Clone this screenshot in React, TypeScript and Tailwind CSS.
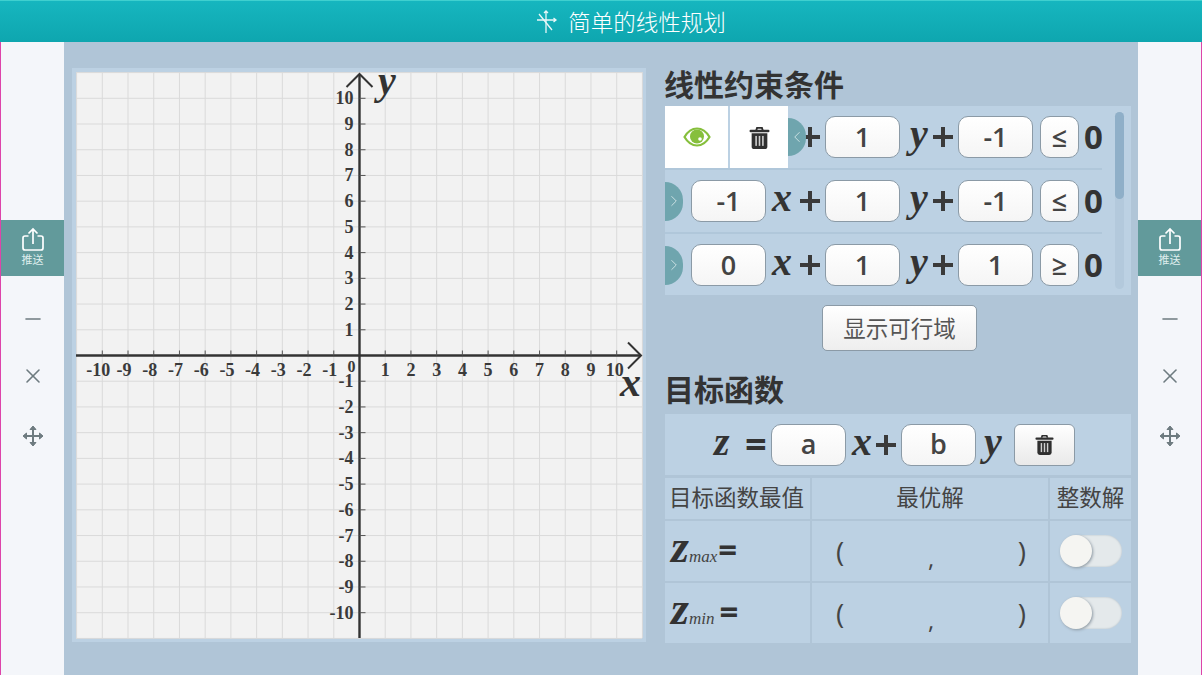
import { ChevronLeft, ChevronRight, Minus, X } from "lucide-react";

const sans = "font-['Open_Sans','Noto_Sans_CJK_SC',sans-serif]";
const math = "font-['Liberation_Serif',serif] italic font-bold text-[#333]";

const Share = () => (
  <svg width="24" height="25" viewBox="0 0 24 25" fill="none" stroke="white" strokeWidth="1.7">
    <path d="M7.5 9H4a2 2 0 0 0-2 2v10a2 2 0 0 0 2 2h16a2 2 0 0 0 2-2V11a2 2 0 0 0-2-2h-3.5" />
    <path d="M12 17V2M7.5 6.5L12 2l4.5 4.5" />
  </svg>
);

const MoveIcon = () => (
  <svg width="22" height="22" viewBox="0 0 22 22" fill="#6e7b80" stroke="#6e7b80" strokeWidth="1">
    <path d="M3 11h16M11 3v16" strokeWidth="2" fill="none" />
    <path d="M11 1l3 3.5H8zM11 21l-3-3.5h6zM1 11l3.5-3v6zM21 11l-3.5 3V8z" strokeLinejoin="round" />
  </svg>
);

const TrashIcon = ({ size = 21 }: { size?: number }) => (
  <svg width={size} height={size + 2} viewBox="0 0 20 22" fill="#2f2f2f">
    <path d="M6 4l1-3h6l1 3h-1.8l-.6-1.4H8.400L7.800 4z" />
    <rect x="0.500" y="3.500" width="19" height="2.500" rx="1" />
    <path d="M2.500 7h15v12.500a2.500 2.500 0 0 1-2.500 2.500H5a2.500 2.500 0 0 1-2.500-2.500z" />
    <g fill="#cfcfcf">
      <rect x="6" y="9.500" width="1.500" height="9.500" />
      <rect x="9.250" y="9.500" width="1.500" height="9.500" />
      <rect x="12.500" y="9.500" width="1.500" height="9.500" />
    </g>
  </svg>
);

const EyeIcon = () => (
  <svg width="28" height="20" viewBox="0 0 28 20">
    <path d="M1.500 10C5 4 9 1.500 14 1.500S23 4 26.500 10C23 16 19 18.500 14 18.500S5 16 1.500 10z" fill="white" stroke="#86bf3c" strokeWidth="2.200" />
    <circle cx="14" cy="9.500" r="7" fill="#86bf3c" />
    <circle cx="17" cy="12" r="1.800" fill="white" />
  </svg>
);

const SideBar = ({ side }: { side: "left" | "right" }) => (
  <div
    className={`w-[64px] shrink-0 h-full bg-[#f4f6fa] flex flex-col items-center pt-[178px] ${
      side === "left" ? "border-l border-[#dd44aa]" : "border-r border-[#dd44aa]"
    }`}
  >
    <div className="w-full h-[56px] pb-[3px] bg-[#629a9b] flex flex-col items-center justify-center text-white">
      <Share />
      <span className="text-[11px] leading-[13px] mt-[1px] text-[#dfeeee] font-['Noto_Sans_CJK_SC',sans-serif]">推送</span>
    </div>
    <Minus className="mt-[31px] text-[#6e7b80]" size={24} strokeWidth={1.6} />
    <X className="mt-[33px] text-[#6e7b80]" size={24} strokeWidth={1.6} />
    <div className="mt-[37px]">
      <MoveIcon />
    </div>
  </div>
);

const Graph = () => {
  const step = 25.72;
  const ox = 283.5;
  const oy = 283.5;
  const ticks = Array.from({ length: 21 }, (_, i) => i - 10).filter((t) => t !== 0);
  return (
    <svg width="566" height="566" viewBox="0 0 566 566" className="block bg-[#f2f2f2] overflow-visible">
      {Array.from({ length: 23 }, (_, i) => i - 11).map((t) => (
        <g key={t} stroke="#dadada" strokeWidth="1">
          <line x1={ox + t * step} y1="0" x2={ox + t * step} y2="566" />
          <line x1="0" y1={oy + t * step} x2="566" y2={oy + t * step} />
        </g>
      ))}
      <g stroke="#333" strokeWidth="2.400" fill="none">
        <line x1="0" y1={oy} x2="565" y2={oy} />
        <line x1={ox} y1="2" x2={ox} y2="566" />
        <path d="M270.500 15 L283.500 2 L296.500 15" strokeWidth="2" />
        <path d="M552 270.500 L565 283.500 L552 296.500" strokeWidth="2" />
      </g>
      {ticks.map((t) => (
        <g key={t} stroke="#555" strokeWidth="1">
          <line x1={ox + t * step} y1={oy - 5} x2={ox + t * step} y2={oy} />
          <line x1={ox} y1={oy - t * step} x2={ox + 6} y2={oy - t * step} />
        </g>
      ))}
      <g className="font-['Liberation_Serif',serif] font-bold" fill="#3a3a3a" fontSize="18">
        {ticks.map((t) => (
          <text key={t} x={ox + t * step - (t < 0 ? 4 : t === 10 ? 2 : 0)} y={oy + 20} textAnchor="middle">
            {t}
          </text>
        ))}
        {ticks.map((t) => (
          <text key={t} x={ox - 6} y={oy - t * step + 6} textAnchor="end">
            {t}
          </text>
        ))}
        <text x={ox - 8} y={oy + 16} textAnchor="middle" fontSize="16">0</text>
      </g>
      <text x="302" y="22" fontSize="40" fill="#333" className="font-['Liberation_Serif',serif] italic font-bold">y</text>
      <text x="544" y="324" fontSize="42" fill="#333" className="font-['Liberation_Serif',serif] italic font-bold">x</text>
    </svg>
  );
};

const Field = ({ value }: { value: string }) => (
  <div
    className={`w-[75px] h-[42px] shrink-0 rounded-[10px] border border-[#8b9aa6] bg-gradient-to-b from-white to-[#f5f5f5] flex items-center justify-center text-[27px] font-semibold text-[#444] ${sans}`}
  >
    {value}
  </div>
);

const Letter = ({ children, className }: { children: string; className: string }) => (
  <span className={`${math} shrink-0 text-[40px] leading-none -mt-[6px] ${className}`}>{children}</span>
);

const Plus = ({ className }: { className: string }) => (
  <svg width="20" height="20" viewBox="0 0 20 20" className={`shrink-0 ${className}`} fill="#3a3a3a">
    <rect x="0" y="8" width="20" height="4" />
    <rect x="8" y="0" width="4" height="20" />
  </svg>
);

const Constraint = ({ a, b, c, op }: { a: string; b: string; c: string; op: string }) => (
  <div className="h-[64px] shrink-0 flex items-center border-b-2 border-[#b0c7da] w-[437px]">
    <div className="w-[18px] h-[39px] shrink-0 rounded-r-full bg-[#6fa5ae] flex items-center text-[#dcebec]">
      <ChevronRight size={20} strokeWidth={1.1} />
    </div>
    <div className="ml-[8px] shrink-0">
      <Field value={a} />
    </div>
    <Letter className="ml-[6px] w-[22px]">x</Letter>
    <Plus className="ml-[6px]" />
    <div className="ml-[5px] shrink-0">
      <Field value={b} />
    </div>
    <Letter className="ml-[10px] w-[20px]">y</Letter>
    <Plus className="ml-[3px]" />
    <div className="ml-[5px] shrink-0">
      <Field value={c} />
    </div>
    <div
      className={`ml-[7px] w-[39px] h-[42px] shrink-0 rounded-[10px] border border-[#8b9aa6] bg-gradient-to-b from-white to-[#f5f5f5] flex items-center justify-center text-[27px] font-semibold text-[#444] ${sans}`}
    >
      {op}
    </div>
    <span className={`ml-[5px] shrink-0 text-[33px] font-bold text-[#333] ${sans}`}>0</span>
  </div>
);

const Toggle = () => (
  <div className="w-[62px] h-[32px] rounded-full bg-[#e4e9eb] shadow-[inset_0_0_2px_#a9b7c2] flex items-center">
    <div className="w-[32px] h-[32px] rounded-full bg-[#f5f5f2] shadow-[1px_1px_3px_#8d99a3]" />
  </div>
);

const Cell = ({ children, className = "" }: { children?: React.ReactNode; className?: string }) => (
  <div className={`bg-[#bcd1e3] flex items-center ${className}`}>{children}</div>
);

const Solution = () => (
  <Cell className={`justify-between pl-[24px] pr-[22px] text-[28px] text-[#444] ${sans}`}>
    <span>(</span>
    <span className="mt-[14px] text-[24px]">,</span>
    <span>)</span>
  </Cell>
);

const ZLabel = ({ sub, gap }: { sub: string; gap: string }) => (
  <Cell className="pl-[6px]">
    <span className={`${math} text-[46px] leading-none -mt-[8px]`}>z</span>
    <span className="font-['Liberation_Serif',serif] italic text-[17px] text-[#444] mt-[12px]">{sub}</span>
    <span className={`text-[33px] font-bold text-[#333] leading-none -mt-[3px] ${gap} ${sans}`}>=</span>
  </Cell>
);

export default function App() {
  return (
    <div className={`w-[1202px] h-[675px] overflow-hidden flex flex-col ${sans}`}>
      <header className="h-[42px] shrink-0 pl-[60px] bg-gradient-to-b from-[#16b6bf] to-[#0ea6af] border-t border-[#3fd0cf] flex items-center justify-center text-white text-[22.500px]">
        <svg width="22" height="24" viewBox="0 0 22 24" fill="none" stroke="white" strokeWidth="1.300" className="mr-[10px] opacity-90">
          <path d="M1 10h19M10 1v22M17.500 8l2.500 2-2.500 2M8 3l2-2 2 2" />
          <path d="M3 4l13 16" />
        </svg>
        <span className="font-['Noto_Sans_CJK_SC',sans-serif] font-light">简单的线性规划</span>
      </header>
      <div className="flex-1 flex min-h-0">
        <SideBar side="left" />
        <main className="flex-1 bg-[#b0c5d7] flex pl-[8px] pt-[26px]">
          <div className="w-[574px] h-[574px] p-[4px] bg-[#bcd1e3] shrink-0">
            <Graph />
          </div>
          <div className="ml-[18px] w-[467px] flex flex-col font-['Noto_Sans_CJK_SC',sans-serif]">
            <h2 className="h-[38px] text-[30px] leading-[30px] font-bold text-[#333]">线性约束条件</h2>
            <div className="relative ml-[1px] w-[466px] h-[189px] bg-[#bcd1e3] overflow-hidden">
              <div className="flex flex-col">
                <Constraint a="-1" b="1" c="-1" op="≤" />
                <Constraint a="-1" b="1" c="-1" op="≤" />
                <Constraint a="0" b="1" c="1" op="≥" />
              </div>
              <div className="absolute left-0 top-0 h-[62px] flex">
                <div className="w-[63px] bg-white flex items-center justify-center">
                  <EyeIcon />
                </div>
                <div className="w-[2px] bg-[#bcd1e3]" />
                <div className="w-[58px] bg-white flex items-center justify-center">
                  <TrashIcon />
                </div>
                <div className="w-[18px] h-[38px] mt-[12px] rounded-r-full bg-[#6fa5ae] flex items-center text-[#dcebec]">
                  <ChevronLeft size={20} strokeWidth={1.1} />
                </div>
              </div>
              <div className="absolute right-[7px] top-[6px] bottom-[6px] w-[9px] rounded-full bg-[#b3c9dc]">
                <div className="h-[87px] rounded-full bg-[#8fafc8]" />
              </div>
            </div>
            <div className="flex justify-center mt-[10px] pl-[4px]">
              <button className="w-[155px] h-[46px] rounded-[5px] border border-[#8b9aa6] bg-gradient-to-b from-white to-[#eeeeee] text-[22.500px] text-[#555]">
                显示可行域
              </button>
            </div>
            <h2 className="mt-[20px] h-[43px] text-[30px] leading-[34px] font-bold text-[#333]">目标函数</h2>
            <div className="ml-[1px] w-[466px] flex flex-col gap-[3px]">
              <div className="h-[61px] bg-[#bcd1e3] flex items-center pl-[49px]">
                <Letter className="w-[24px]">z</Letter>
                <span className={`ml-[7px] w-[26px] text-[38px] font-bold leading-none -mt-[3px] text-[#333] ${sans}`}>=</span>
                <Field value="a" />
                <Letter className="ml-[6px] w-[21px]">x</Letter>
                <Plus className="ml-[3px]" />
                <div className="ml-[5px]">
                  <Field value="b" />
                </div>
                <Letter className="ml-[8px] w-[20px]">y</Letter>
                <button className="ml-[10px] w-[61px] h-[42px] rounded-[6px] border border-[#8b9aa6] bg-gradient-to-b from-white to-[#e9e9e9] flex items-center justify-center">
                  <TrashIcon size={19} />
                </button>
              </div>
              <div className="grid grid-cols-[145px_236px_81px] grid-rows-[41px_60px_60px] gap-[2px] text-[22.500px] text-[#444]">
                <Cell className="justify-center pb-[4px] pr-[2px]">目标函数最值</Cell>
                <Cell className="justify-center pb-[4px]">最优解</Cell>
                <Cell className="justify-center pb-[4px]">整数解</Cell>
                <ZLabel sub="max" gap="ml-[1px]" />
                <Solution />
                <Cell className="justify-center">
                  <Toggle />
                </Cell>
                <ZLabel sub="min" gap="ml-[5px]" />
                <Solution />
                <Cell className="justify-center">
                  <Toggle />
                </Cell>
              </div>
            </div>
          </div>
        </main>
        <SideBar side="right" />
      </div>
    </div>
  );
}
